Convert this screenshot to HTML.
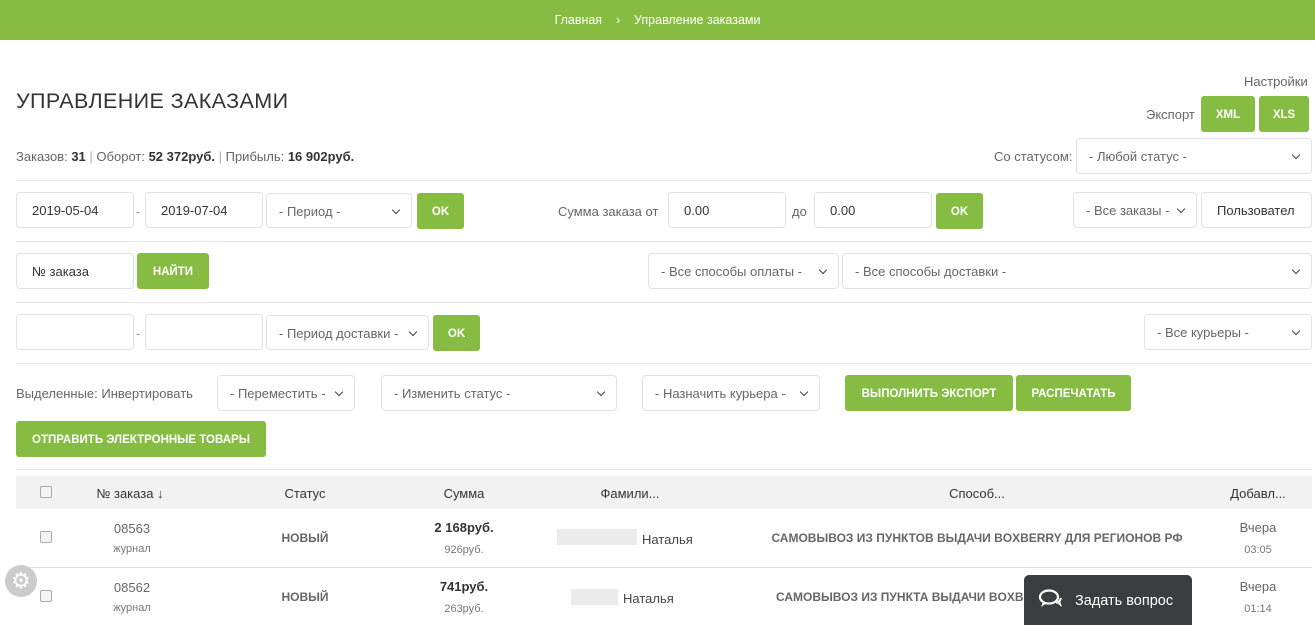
<!DOCTYPE html>
<html><head><meta charset="utf-8"><style>
*{box-sizing:border-box;margin:0;padding:0}
body{width:1315px;height:618px;overflow:hidden;background:#fff;font-family:"Liberation Sans","DejaVu Sans",sans-serif;font-size:13px;color:#555;position:relative}
.a{position:absolute}
.top{left:0;top:0;width:1315px;height:40px;background:#86bc42;color:#fff;font-size:12.5px;text-align:center;line-height:40px}
.in,.sel{position:absolute;height:36px;border:1px solid #e2e2e2;border-radius:4px;background:#fff;line-height:36px;padding-left:15px;color:#333;font-size:13px;white-space:nowrap;overflow:hidden}
.sel{padding-left:12px;color:#666}
.sel:after{content:"";position:absolute;right:12px;top:13px;width:5px;height:5px;border-right:1.5px solid #444;border-bottom:1.5px solid #444;transform:rotate(45deg)}
.btn{position:absolute;background:#86bc42;color:#fff;font-weight:bold;font-size:11.5px;text-align:center;border-radius:3px;line-height:38px;height:36px}
.hr{position:absolute;left:16px;width:1296px;height:1px;background:#e8e8e8}
.cb{position:absolute;width:12px;height:12px;border:1px solid #aaa;border-radius:2px;background:#f4f4f4}
.c{position:absolute;text-align:center}
</style></head><body>
<div class="a top">Главная &nbsp;&nbsp;&nbsp;›&nbsp;&nbsp;&nbsp; Управление заказами</div>
<div class="a" style="left:16px;top:89px;font-size:21.5px;color:#333;letter-spacing:0.4px">УПРАВЛЕНИЕ ЗАКАЗАМИ</div>
<div class="a" style="left:1244px;top:74px;font-size:13px;color:#666">Настройки</div>
<div class="a" style="left:1146px;top:107px;color:#666">Экспорт</div>
<div class="btn" style="left:1201px;top:96px;width:54px">XML</div>
<div class="btn" style="left:1259px;top:96px;width:50px">XLS</div>
<div class="a" style="left:16px;top:149px;color:#666">Заказов: <b style="color:#333">31</b> <span style="color:#aaa">|</span> Оборот: <b style="color:#333">52 372руб.</b> <span style="color:#aaa">|</span> Прибыль: <b style="color:#333">16 902руб.</b></div>
<div class="a" style="left:994px;top:149px;color:#666">Со статусом:</div>
<div class="sel" style="left:1076px;top:138px;width:236px;height:36px">- Любой статус -</div>
<div class="hr" style="top:180px"></div>

<div class="in" style="left:16px;top:192px;width:118px">2019-05-04</div>
<div class="a" style="left:136px;top:204px;color:#999">-</div>
<div class="in" style="left:145px;top:192px;width:118px">2019-07-04</div>
<div class="sel" style="left:266px;top:193px;width:146px;height:35px">- Период -</div>
<div class="btn" style="left:417px;top:193px;width:47px">OK</div>
<div class="a" style="left:558px;top:204px;color:#666">Сумма заказа от</div>
<div class="in" style="left:668px;top:192px;width:118px">0.00</div>
<div class="a" style="left:792px;top:204px;color:#666">до</div>
<div class="in" style="left:814px;top:192px;width:118px">0.00</div>
<div class="btn" style="left:936px;top:193px;width:47px">OK</div>
<div class="sel" style="left:1073px;top:192px;width:124px">- Все заказы -</div>
<div class="in" style="left:1201px;top:192px;width:111px">Пользовател</div>
<div class="hr" style="top:241px"></div>

<div class="in" style="left:16px;top:253px;width:118px">№ заказа</div>
<div class="btn" style="left:137px;top:253px;width:72px">НАЙТИ</div>
<div class="sel" style="left:648px;top:253px;width:191px">- Все способы оплаты -</div>
<div class="sel" style="left:842px;top:253px;width:470px">- Все способы доставки -</div>
<div class="hr" style="top:302px"></div>

<div class="in" style="left:16px;top:314px;width:118px"></div>
<div class="a" style="left:136px;top:326px;color:#999">-</div>
<div class="in" style="left:145px;top:314px;width:118px"></div>
<div class="sel" style="left:266px;top:315px;width:163px;height:35px">- Период доставки -</div>
<div class="btn" style="left:433px;top:315px;width:47px">OK</div>
<div class="sel" style="left:1144px;top:314px;width:168px">- Все курьеры -</div>
<div class="hr" style="top:363px"></div>

<div class="a" style="left:16px;top:386px;color:#666">Выделенные: Инвертировать</div>
<div class="sel" style="left:217px;top:375px;width:138px">- Переместить -</div>
<div class="sel" style="left:381px;top:375px;width:236px">- Изменить статус -</div>
<div class="sel" style="left:642px;top:375px;width:178px">- Назначить курьера -</div>
<div class="btn" style="left:845px;top:375px;width:168px">ВЫПОЛНИТЬ ЭКСПОРТ</div>
<div class="btn" style="left:1016px;top:375px;width:115px">РАСПЕЧАТАТЬ</div>
<div class="btn" style="left:16px;top:421px;width:250px">ОТПРАВИТЬ ЭЛЕКТРОННЫЕ ТОВАРЫ</div>
<div class="hr" style="top:469px"></div>

<div class="a" style="left:16px;top:476px;width:1296px;height:33px;background:#f2f2f2"></div>
<div class="cb" style="left:40px;top:486px"></div>
<div class="c" style="left:80px;top:486px;width:100px;color:#333">№ заказа ↓</div>
<div class="c" style="left:255px;top:486px;width:100px;color:#333">Статус</div>
<div class="c" style="left:414px;top:486px;width:100px;color:#333">Сумма</div>
<div class="c" style="left:580px;top:486px;width:100px;color:#333">Фамили...</div>
<div class="c" style="left:927px;top:486px;width:100px;color:#333">Способ...</div>
<div class="c" style="left:1208px;top:486px;width:100px;color:#333">Добавл...</div>

<div class="cb" style="left:40px;top:531px"></div>
<div class="c" style="left:82px;top:521px;width:100px;color:#666">08563</div>
<div class="c" style="left:82px;top:543px;width:100px;font-size:11px;color:#777">журнал</div>
<div class="c" style="left:255px;top:531px;width:100px;font-weight:bold;color:#666;font-size:12px">НОВЫЙ</div>
<div class="c" style="left:414px;top:520px;width:100px;font-weight:bold;color:#333">2 168руб.</div>
<div class="c" style="left:414px;top:544px;width:100px;font-size:11px;color:#777">926руб.</div>
<div class="a" style="left:557px;top:529px;width:80px;height:16px;background:#ececec"></div>
<div class="a" style="left:642px;top:532px;color:#444">Наталья</div>
<div class="c" style="left:700px;top:531px;width:554px;font-weight:bold;color:#666;font-size:12px">САМОВЫВОЗ ИЗ ПУНКТОВ ВЫДАЧИ BOXBERRY ДЛЯ РЕГИОНОВ РФ</div>
<div class="c" style="left:1208px;top:520px;width:100px;color:#666">Вчера</div>
<div class="c" style="left:1208px;top:544px;width:100px;font-size:11px;color:#777">03:05</div>
<div class="hr" style="top:567px;background:#ddd"></div>

<div class="cb" style="left:40px;top:590px"></div>
<div class="c" style="left:82px;top:580px;width:100px;color:#666">08562</div>
<div class="c" style="left:82px;top:602px;width:100px;font-size:11px;color:#777">журнал</div>
<div class="c" style="left:255px;top:590px;width:100px;font-weight:bold;color:#666;font-size:12px">НОВЫЙ</div>
<div class="c" style="left:414px;top:579px;width:100px;font-weight:bold;color:#333">741руб.</div>
<div class="c" style="left:414px;top:603px;width:100px;font-size:11px;color:#777">263руб.</div>
<div class="a" style="left:571px;top:589px;width:47px;height:16px;background:#ececec"></div>
<div class="a" style="left:623px;top:591px;color:#444">Наталья</div>
<div class="a" style="left:776px;top:590px;font-weight:bold;color:#666;font-size:12px;white-space:nowrap">САМОВЫВОЗ ИЗ ПУНКТА ВЫДАЧИ BOXB</div>
<div class="c" style="left:1208px;top:579px;width:100px;color:#666">Вчера</div>
<div class="c" style="left:1208px;top:603px;width:100px;font-size:11px;color:#777">01:14</div>

<div class="a" style="left:1024px;top:575px;width:168px;height:50px;background:#3c3d3f;border-radius:5px 5px 0 0"></div>
<svg class="a" style="left:1038px;top:588px" width="26" height="22" viewBox="0 0 26 22"><ellipse cx="11" cy="9" rx="9" ry="6.5" fill="none" stroke="#fff" stroke-width="2.2"/><path d="M5 14 L3 19 L9 15" fill="#fff"/><path d="M18 15 Q22 14 23 10" fill="none" stroke="#fff" stroke-width="2"/><path d="M20 16 L24 19 L22 13" fill="#fff"/></svg>
<div class="a" style="left:1075px;top:593px;color:#fff;font-size:14.5px">Задать вопрос</div>
<div class="a" style="left:5px;top:565px;width:32px;height:32px;border-radius:50%;background:#ccc;color:#fff;font-size:22px;line-height:32px;text-align:center">⚙</div>
</body></html>
